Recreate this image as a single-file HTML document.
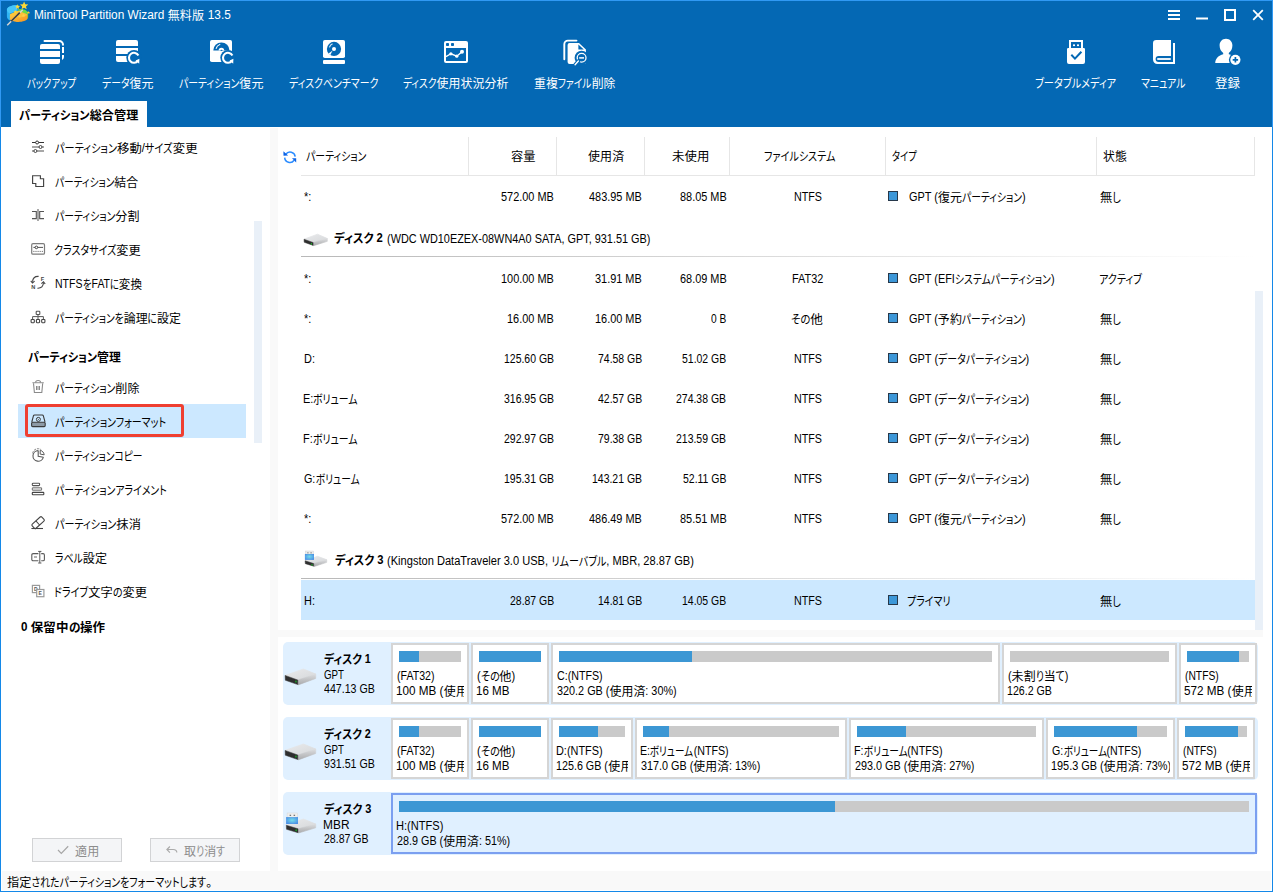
<!DOCTYPE html>
<html lang="ja"><head><meta charset="utf-8"><title>MiniTool Partition Wizard 無料版 13.5</title>
<style>
*{box-sizing:border-box}
html,body{margin:0;padding:0}
body{width:1273px;height:892px;overflow:hidden;background:#fff;position:relative;
 font-family:"Liberation Sans","Noto Sans CJK JP",sans-serif;font-size:12px;color:#000}
#app div, #app svg{position:absolute}
#app{position:absolute;left:0;top:0;width:1273px;height:892px;overflow:hidden;background:#fff}
.t{white-space:nowrap;line-height:20px;height:20px}
.k,.l{display:inline-block;position:relative;transform-origin:0 50%;white-space:pre}
.k{font-feature-settings:"palt";transform:scaleX(.82);top:1px}
.l{transform:scaleX(.91)}
.j{letter-spacing:0.1px;position:relative;top:1px}
.b{font-weight:bold}
.b .k,.b .l{transform:scaleX(.93)}
.w{color:#fff}
.g{color:#8c8c8c}
</style></head>
<body><div id="app">
<div style="left:0px;top:0px;width:1273px;height:892px;background:#1488e8;"></div>
<div style="left:0px;top:0px;width:1273px;height:127px;background:#3099f4;"></div>
<div style="left:1px;top:1px;width:1271px;height:890px;background:#fff;"></div>
<div style="left:1px;top:1px;width:1271px;height:126px;background:#0468b4;"></div>
<svg width="0" height="0" style="left:0;top:0"><defs><linearGradient id="dT" x1="0" y1="0" x2="1" y2="1"><stop offset="0" stop-color="#e9eaec"/><stop offset="1" stop-color="#d6d8da"/></linearGradient><linearGradient id="dR" x1="0" y1="0" x2="0" y2="1"><stop offset="0" stop-color="#dcdddf"/><stop offset="1" stop-color="#a9aaac"/></linearGradient><radialGradient id="uB" cx=".5" cy=".45" r=".6"><stop offset="0" stop-color="#74dcea"/><stop offset="1" stop-color="#4a8fe4"/></radialGradient></defs></svg>
<svg style="left:2px;top:0px" width="32" height="30" viewBox="2 0 32 30"><defs><linearGradient id="lgO" x1="0" y1="0" x2="1" y2="1"><stop offset="0" stop-color="#fdd24a"/><stop offset="1" stop-color="#f7931e"/></linearGradient></defs><path d="M6.9 9.5C7.5 6.6 11.5 5 17 5.2L17.6 11 10 13.8 10 20.6C8 19.6 6.9 18 6.9 16.4z" fill="#2fb4f5"/><path d="M6.9 9.5C7.5 6.6 11.5 5 17 5.2L17.6 10.2 9.8 13.4C8 12.6 6.9 11.2 6.9 9.5z" fill="#45c6fb"/><path d="M18 9.3C23 8.6 27.6 10.3 28.2 13V17.2C28 18.2 27 19 26 19.6L26 14z" fill="#4fc437"/><path d="M18 9.3C23 8.6 27.6 10.3 28.2 13C28 14 27 14.6 26 15L18.5 12z" fill="#6bd84a"/><path d="M9.9 14.2L18 10.8 27.6 14.4V18.6C26.6 21 21.5 22.3 16.8 21.9C13.6 21.6 11 20.8 9.9 19.6z" fill="url(#lgO)"/><path d="M9.9 14.2L18 10.8 27.6 14.4C26 16.4 21.5 17.4 17 17.2C13.8 17 11 16 9.9 14.2z" fill="#fdc53a" opacity=".75"/><polygon points="24.10,1.40 25.26,4.20 28.28,4.44 25.98,6.41 26.69,9.36 24.10,7.78 21.51,9.36 22.22,6.41 19.92,4.44 22.94,4.20" fill="#fdd835"/><polygon points="17.60,4.20 18.29,5.85 20.07,6.00 18.71,7.16 19.13,8.90 17.60,7.97 16.07,8.90 16.49,7.16 15.13,6.00 16.91,5.85" fill="#fdd835"/><polygon points="15.40,9.90 15.90,11.11 17.21,11.21 16.21,12.06 16.52,13.34 15.40,12.66 14.28,13.34 14.59,12.06 13.59,11.21 14.90,11.11" fill="#fdd835"/><polygon points="28.50,10.90 28.95,11.98 30.12,12.07 29.23,12.84 29.50,13.98 28.50,13.37 27.50,13.98 27.77,12.84 26.88,12.07 28.05,11.98" fill="#f9c92d"/><polygon points="23.50,13.50 24.03,14.77 25.40,14.88 24.36,15.78 24.68,17.12 23.50,16.40 22.32,17.12 22.64,15.78 21.60,14.88 22.97,14.77" fill="#fbd24a"/><polygon points="19.60,15.40 19.92,16.16 20.74,16.23 20.11,16.77 20.31,17.57 19.60,17.14 18.89,17.57 19.09,16.77 18.46,16.23 19.28,16.16" fill="#fbd24a"/><path d="M7.2 25.2L22.8 9.7" stroke="#d4d4d4" stroke-width="1.5"/><path d="M11.1 21.3L19.8 12.6" stroke="#3c3c3c" stroke-width="1.5"/></svg>
<div class="t w" style="left:33.60px;top:4.5px;transform:scaleX(1.0026);transform-origin:0 50%;"><span class="l" style="width:133.34px;transform:scaleX(0.985)">MiniTool Partition Wizard </span><span class="j">無料版</span><span class="l" style="width:26.30px;transform:scaleX(0.985)"> 13.5</span></div>
<svg style="left:1160px;top:4px" width="110" height="22" viewBox="1160 4 110 22"><path d="M1168 11h12M1168 15h12M1168 19h12" stroke="#fff" stroke-width="2"/><path d="M1196 18.5h12" stroke="#fff" stroke-width="2"/><rect x="1225" y="10" width="10" height="10" fill="none" stroke="#fff" stroke-width="2"/><path d="M1253.2 10.2l9.6 9.6M1262.8 10.2l-9.6 9.6" stroke="#fff" stroke-width="1.8"/></svg>
<svg style="left:34px;top:34px" width="36" height="36" viewBox="34 34 36 36"><path d="M40 46a2 2 0 0 1 2-2h16a2 2 0 0 1 2 2v3h-20z" fill="#fff"/><rect x="40" y="51" width="20" height="6" fill="#fff"/><path d="M40 59h20v3a2 2 0 0 1-2 2h-16a2 2 0 0 1-2-2z" fill="#fff"/><path d="M44.5 41h14.8a3.7 3.7 0 0 1 3.7 3.7" stroke="#fff" stroke-width="2" fill="none" stroke-linecap="round"/><path d="M63 47v6" stroke="#fff" stroke-width="2"/><path d="M62 55h2v2a3.4 3.4 0 0 1-2 3z" fill="#fff"/></svg>
<div class="t w" style="left:26.80px;top:73px;transform:scaleX(0.9462);transform-origin:0 50%;"><span class="k" style="width:51.84px">バックアップ</span></div>
<svg style="left:110px;top:34px" width="36" height="36" viewBox="110 34 36 36"><path d="M116 42a2 2 0 0 1 2-2h18a2 2 0 0 1 2 2v4h-22z" fill="#fff"/><rect x="116" y="48" width="22" height="6" fill="#fff"/><path d="M116 56h12v6h-10a2 2 0 0 1-2-2z" fill="#fff"/><circle cx="134" cy="57.8" r="7.7" fill="#0468b4"/><path d="M138.41 55.45A5.0 5.0 0 1 0 137.94 60.88" fill="none" stroke="#fff" stroke-width="2.1"/><path d="M135.60 60.40L139.40 58.80L139.20 63.80z" fill="#fff"/></svg>
<div class="t w" style="left:102.00px;top:73px;transform:scaleX(1.0000);transform-origin:0 50%;"><span class="k" style="width:27.51px">データ</span><span class="j">復元</span></div>
<svg style="left:204px;top:34px" width="36" height="36" viewBox="204 34 36 36"><rect x="210" y="40" width="22" height="22" rx="1.8" fill="#fff"/><path d="M213.3 50.6a8.1 8.1 0 0 1 16.2 0z" fill="#0468b4"/><path d="M218.6 50.6a2.8 2.8 0 0 1 5.6 0z" fill="#fff"/><ellipse cx="221.5" cy="50.3" rx="1.1" ry=".6" fill="#0468b4"/><path d="M216.2 48.4a5.6 5.6 0 0 1 3.6-4" stroke="#fff" stroke-width="1.1" fill="none" stroke-linecap="round"/><circle cx="228" cy="57.8" r="7.7" fill="#0468b4"/><path d="M232.41 55.45A5.0 5.0 0 1 0 231.94 60.88" fill="none" stroke="#fff" stroke-width="2.1"/><path d="M229.60 60.40L233.40 58.80L233.20 63.80z" fill="#fff"/></svg>
<div class="t w" style="left:179.00px;top:73px;transform:scaleX(1.0036);transform-origin:0 50%;"><span class="k" style="width:60.06px">パーティション</span><span class="j">復元</span></div>
<svg style="left:316px;top:34px" width="36" height="36" viewBox="316 34 36 36"><rect x="323" y="40" width="22" height="18" rx="1.8" fill="#fff"/><circle cx="334" cy="48.9" r="7.1" fill="#0468b4"/><circle cx="334" cy="48.9" r="2" fill="#fff"/><path d="M329.6 47a5 5 0 0 1 2.6-2.9" stroke="#fff" stroke-width="1.1" fill="none" stroke-linecap="round" opacity=".85"/><path d="M332.6 50.6L328.6 53.4 330.2 55.2z" fill="#fff"/><rect x="323" y="60" width="22" height="4" rx="1" fill="#fff"/></svg>
<div class="t w" style="left:288.90px;top:73px;transform:scaleX(1.0057);transform-origin:0 50%;"><span class="k" style="width:88.88px">ディスクベンチマーク</span></div>
<svg style="left:438px;top:34px" width="36" height="36" viewBox="438 34 36 36"><rect x="444" y="41" width="24" height="22" rx="2" fill="#fff"/><rect x="446" y="48" width="20" height="13" fill="#0468b4"/><rect x="446" y="43" width="3" height="3" rx=".8" fill="#0468b4"/><rect x="451" y="43" width="3" height="3" rx=".8" fill="#0468b4"/><path d="M446 56.6L450.9 53.8 456.8 56.2 462 51.8" stroke="#fff" stroke-width="1.3" fill="none"/><circle cx="450.9" cy="53.8" r="1.6" fill="#fff"/><circle cx="456.8" cy="56.2" r="1.6" fill="#fff"/><circle cx="462" cy="51.8" r="2" fill="#fff"/></svg>
<div class="t w" style="left:402.80px;top:73px;transform:scaleX(0.9906);transform-origin:0 50%;"><span class="k" style="width:33.81px">ディスク</span><span class="j">使用状況分析</span></div>
<svg style="left:557px;top:34px" width="36" height="36" viewBox="557 34 36 36"><path d="M576.5 40.6h-8.6a3.6 3.6 0 0 0-3.6 3.6v15" stroke="#fff" stroke-width="1.9" fill="none" stroke-linecap="round"/><path d="M569.6 43h9.4l6.9 6.6v12.4a2 2 0 0 1-2 2h-14.3a2 2 0 0 1-2-2v-17a2 2 0 0 1 2-2z" fill="#fff"/><path d="M578.4 44.6l5.4 5h-5.4z" fill="#0468b4"/><circle cx="581.6" cy="57.8" r="7" fill="#0468b4"/><circle cx="581.6" cy="57.8" r="4.4" fill="none" stroke="#fff" stroke-width="1.3"/><path d="M579.2 57.9h4.8" stroke="#fff" stroke-width="1.5"/><path d="M578.4 61l-3.3 3.6" stroke="#0468b4" stroke-width="3.6" stroke-linecap="round"/><path d="M578.4 61l-3.3 3.7" stroke="#fff" stroke-width="1.4" stroke-linecap="round"/></svg>
<div class="t w" style="left:534.20px;top:73px;transform:scaleX(0.9890);transform-origin:0 50%;"><span class="j">重複</span><span class="k" style="width:34.08px">ファイル</span><span class="j">削除</span></div>
<svg style="left:1058px;top:34px" width="36" height="36" viewBox="1058 34 36 36"><rect x="1069" y="40" width="14" height="9" fill="#fff"/><rect x="1071" y="42" width="10" height="6" fill="#0468b4"/><rect x="1073" y="44.4" width="2" height="1.7" fill="#fff"/><rect x="1077" y="44.4" width="2" height="1.7" fill="#fff"/><path d="M1067 49.2a1.2 1.2 0 0 1 1.2-1.2h15.6a1.2 1.2 0 0 1 1.2 1.2v12.8a2 2 0 0 1-2 2h-14a2 2 0 0 1-2-2z" fill="#fff"/><path d="M1071.3 54.8l3.65 3.8 6.45-6.84" stroke="#0468b4" stroke-width="2" fill="none"/></svg>
<div class="t w" style="left:1034.87px;top:73px;transform:scaleX(1.0325);transform-origin:0 50%;"><span class="k" style="width:78.63px">ブータブルメディア</span></div>
<svg style="left:1146px;top:34px" width="36" height="36" viewBox="1146 34 36 36"><path d="M1156.2 40h14.8v16h-12.4a3 3 0 0 0 0 6h14.4v-19h2v21h-17.6a4.4 4.4 0 0 1-4.4-4.4v-16.4a3.2 3.2 0 0 1 3.2-3.2z" fill="#fff"/><rect x="1157" y="58" width="14" height="2" rx="1" fill="#fff" opacity=".9"/></svg>
<div class="t w" style="left:1140.80px;top:73px;transform:scaleX(1.0045);transform-origin:0 50%;"><span class="k" style="width:44.29px">マニュアル</span></div>
<svg style="left:1210px;top:34px" width="36" height="36" viewBox="1210 34 36 36"><path d="M1226 38.8c3.8 0 6.4 2.8 6.4 6.8 0 3.3-1.4 6-3.6 7.3v1.4c2.6.6 4.6 1.6 6 3.2l-5.4 5.5h-14.2c.4-4.600 3.400-7.600 8-8.700v-1.400c-2.200-1.300-3.600-4-3.600-7.300 0-4 2.600-6.800 6.400-6.800z" fill="#fff"/><circle cx="1235.4" cy="59.8" r="6.5" fill="#0468b4"/><circle cx="1235.4" cy="59.8" r="5.1" fill="#fff"/><path d="M1232.700 59.8h5.400M1235.4 57.100v5.400" stroke="#0468b4" stroke-width="1.700"/></svg>
<div class="t w" style="left:1214.66px;top:73px;transform:scaleX(1.0391);transform-origin:0 50%;"><span class="j">登録</span></div>
<div style="left:11px;top:101px;width:136px;height:26px;background:#fff;"></div>
<div class="t b" style="left:18.90px;top:105px;transform:scaleX(1.0085);transform-origin:0 50%;"><span class="k" style="width:70.06px">パーティション</span><span class="j">総合管理</span></div>
<div style="left:270px;top:128px;width:8px;height:743px;background:#f9f9f9;"></div>
<div style="left:254px;top:221px;width:8px;height:222px;background:#e9f0f8;"></div>
<div style="left:18px;top:404px;width:228px;height:34px;background:#cce8ff;"></div>
<svg style="left:28px;top:135px" width="22" height="24" viewBox="28 135 22 24"><g transform="translate(0 0)" fill="none" stroke="#5a5a5a" stroke-width="1"><path d="M32 142.5h12" stroke="#333"/><path d="M32 147h12M32 151h12" stroke="#8a8a8a" stroke-width="1.400"/><circle cx="37.1" cy="142.5" r="1.500" fill="#fff" stroke="#333"/><circle cx="40.5" cy="147" r="1.500" fill="#fff" stroke="#444"/><circle cx="35.4" cy="151" r="1.500" fill="#fff" stroke="#444"/></g></svg>
<div class="t" style="left:54.80px;top:138px;transform:scaleX(1.0319);transform-origin:0 50%;"><span class="k" style="width:60.06px">パーティション</span><span class="j">移動</span><span class="l" style="width:3.04px">/</span><span class="k" style="width:26.77px">サイズ</span><span class="j">変更</span></div>
<svg style="left:28px;top:169px" width="22" height="24" viewBox="28 169 22 24"><g transform="translate(0 0)" fill="none" stroke="#5a5a5a" stroke-width="1"><path d="M32.6 175.700h7.800v3h3.200v7.800h-7.800v-3h-3.200z" stroke="#444" stroke-width="1.150"/></g></svg>
<div class="t" style="left:54.80px;top:172px;transform:scaleX(0.9881);transform-origin:0 50%;"><span class="k" style="width:60.06px">パーティション</span><span class="j">結合</span></div>
<svg style="left:28px;top:203px" width="22" height="24" viewBox="28 203 22 24"><g transform="translate(0 0)" fill="none" stroke="#5a5a5a" stroke-width="1"><path d="M38 209v12" stroke="#9a9a9a" stroke-width="1.700"/><path d="M32 211.500h4.300v7.100h-4.300M44 211.500h-4.300v7.100h4.300" stroke="#555" stroke-width="1.100"/></g></svg>
<div class="t" style="left:54.80px;top:206px;transform:scaleX(1.0036);transform-origin:0 50%;"><span class="k" style="width:60.06px">パーティション</span><span class="j">分割</span></div>
<svg style="left:28px;top:237px" width="22" height="24" viewBox="28 237 22 24"><g transform="translate(0 0)" fill="none" stroke="#5a5a5a" stroke-width="1"><rect x="31.700" y="243.700" width="12.800" height="10.500" rx="1.300" stroke="#7c7c7c" stroke-width="1.200"/><path d="M33.400 247.400h9.600" stroke="#555"/><circle cx="36.4" cy="247.400" r="1.300" fill="#fff" stroke="#444"/><path d="M33.400 251.400h9.600" stroke="#555" stroke-width="1" stroke-dasharray="1 1.100"/></g></svg>
<div class="t" style="left:53.78px;top:240px;transform:scaleX(1.0155);transform-origin:0 50%;"><span class="k" style="width:61.36px">クラスタサイズ</span><span class="j">変更</span></div>
<svg style="left:28px;top:271px" width="22" height="24" viewBox="28 271 22 24"><g transform="translate(0 0)" fill="none" stroke="#5a5a5a" stroke-width="1"><path d="M38.6 276.400c-3.400-.200-5.800 2-6.100 5.400" stroke="#444" stroke-width="1.100"/><path d="M30.800 280.800l1.700 2.200 2.100-1.900" stroke="#444" stroke-width="1.100"/><path d="M37.400 288.200c3.400.200 5.800-2 6.100-5.400" stroke="#444" stroke-width="1.100"/><path d="M45.200 284l-1.700-2.200-2.100 1.900" stroke="#444" stroke-width="1.100"/><text x="40.800" y="280.900" font-family="Liberation Sans,sans-serif" font-size="5.600" font-weight="bold" fill="#444" stroke="none">F</text><text x="31.300" y="288.900" font-family="Liberation Sans,sans-serif" font-size="5.600" font-weight="bold" fill="#444" stroke="none">N</text></g></svg>
<div class="t" style="left:54.64px;top:274px;transform:scaleX(0.9618);transform-origin:0 50%;"><span class="l" style="width:28.52px">NTFS</span><span class="k" style="width:9.08px">を</span><span class="l" style="width:19.22px">FAT</span><span class="k" style="width:9.48px">に</span><span class="j">変換</span></div>
<svg style="left:28px;top:305px" width="22" height="24" viewBox="28 305 22 24"><g transform="translate(0 0)" fill="none" stroke="#5a5a5a" stroke-width="1"><rect x="36.200" y="311.300" width="3.600" height="3.200" rx=".6" stroke="#555" stroke-width="1.100"/><path d="M38 314.500v2M32.600 319.400v-2.800h10.800v2.800M38 316.600v2.800" stroke="#555" stroke-width="1"/><rect x="31.1" y="319.500" width="3.200" height="3.200" rx=".6" stroke="#444" stroke-width="1.100"/><rect x="36.4" y="319.500" width="3.200" height="3.200" rx=".6" stroke="#444" stroke-width="1.100"/><rect x="41.7" y="319.500" width="3.200" height="3.200" rx=".6" stroke="#444" stroke-width="1.100"/></g></svg>
<div class="t" style="left:54.80px;top:308px;transform:scaleX(0.9929);transform-origin:0 50%;"><span class="k" style="width:69.15px">パーティションを</span><span class="j">論理</span><span class="k" style="width:9.48px">に</span><span class="j">設定</span></div>
<svg style="left:28px;top:375px" width="22" height="24" viewBox="28 375 22 24"><g transform="translate(0 0)" fill="none" stroke="#5a5a5a" stroke-width="1"><path d="M32.400 382.700h11.400" stroke="#9a9a9a" stroke-width="1.100"/><path d="M35.600 382.400c0-2.600 5-2.600 5 0" stroke="#8a8a8a" stroke-width="1.100"/><path d="M33.500 383.200l.9 9.300h7.400l.9-9.300" stroke="#8a8a8a" stroke-width="1.100"/><path d="M36.800 386v3.900M39.200 386v3.900" stroke="#777" stroke-width="1.300"/></g></svg>
<div class="t" style="left:54.80px;top:378px;transform:scaleX(1.0036);transform-origin:0 50%;"><span class="k" style="width:60.06px">パーティション</span><span class="j">削除</span></div>
<svg style="left:28px;top:409px" width="22" height="24" viewBox="28 409 22 24"><g transform="translate(0 0)" fill="none" stroke="#5a5a5a" stroke-width="1"><path d="M31.800 422l1.700-6.300c.2-.5.500-.7 1-.7h7.800c.5 0 .8.200 1 .7l1.700 6.300" stroke="#3a3a3a" stroke-width="1.100"/><rect x="31.600" y="422.300" width="13.600" height="4.300" rx="1" stroke="#3a3a3a" stroke-width="1.100" fill="#8d9aa6"/><circle cx="38.4" cy="419.400" r="2" stroke="#3a3a3a" stroke-width="1"/><circle cx="38.4" cy="419.400" r=".5" fill="#3a3a3a" stroke="none"/></g></svg>
<div class="t" style="left:54.80px;top:412px;transform:scaleX(1.0156);transform-origin:0 50%;"><span class="k" style="width:109.48px">パーティションフォーマット</span></div>
<svg style="left:28px;top:443px" width="22" height="24" viewBox="28 443 22 24"><g transform="translate(0 0)" fill="none" stroke="#5a5a5a" stroke-width="1"><path d="M38.2 450.6a5.3 5.3 0 1 0 5.2 6.6" stroke="#5a5a5a" stroke-width="1.1"/><path d="M32.6 453.4a5.4 5.4 0 0 1 8.6-3.6" stroke="#8a8a8a" stroke-width="1" stroke-dasharray="2.4 .9"/><path d="M38.2 450.6v5.6l5.200 1" stroke="#5a5a5a" stroke-width="1.1"/><path d="M40.200 450.300c2.200.5 3.700 2.200 4 4.500l-4-0.700z" stroke="#5a5a5a" stroke-width="1"/></g></svg>
<div class="t" style="left:54.80px;top:446px;transform:scaleX(0.9909);transform-origin:0 50%;"><span class="k" style="width:88.27px">パーティションコピー</span></div>
<svg style="left:28px;top:477px" width="22" height="24" viewBox="28 477 22 24"><g transform="translate(0 0)" fill="none" stroke="#5a5a5a" stroke-width="1"><rect x="32.300" y="483.300" width="7.300" height="2.300" rx=".8" stroke="#555" stroke-width="1.100"/><rect x="32.300" y="487.700" width="9.300" height="2.600" rx=".9" stroke="#777" stroke-width="1.100" fill="#e4e4e4"/><rect x="32.300" y="492.400" width="11.500" height="2.400" rx=".6" stroke="#444" stroke-width="1.100"/></g></svg>
<div class="t" style="left:54.80px;top:480px;transform:scaleX(1.0045);transform-origin:0 50%;"><span class="k" style="width:111.31px">パーティションアライメント</span></div>
<svg style="left:28px;top:511px" width="22" height="24" viewBox="28 511 22 24"><g transform="translate(0 0)" fill="none" stroke="#5a5a5a" stroke-width="1"><path d="M31.400 528.500h11.600" stroke="#444" stroke-width="1.100"/><g transform="rotate(-42 38.100 522.600)"><rect x="31.600" y="519.800" width="13" height="5.600" rx="1.200" stroke="#444" stroke-width="1.100"/><path d="M37.600 519.800v5.600" stroke="#444" stroke-width="1"/></g></g></svg>
<div class="t" style="left:54.80px;top:514px;transform:scaleX(1.0217);transform-origin:0 50%;"><span class="k" style="width:60.06px">パーティション</span><span class="j">抹消</span></div>
<svg style="left:28px;top:545px" width="22" height="24" viewBox="28 545 22 24"><g transform="translate(0 0)" fill="none" stroke="#5a5a5a" stroke-width="1"><path d="M38.400 553.600h-5.300a1.300 1.300 0 0 0-1.300 1.300v4.600a1.300 1.300 0 0 0 1.300 1.300h5.300M41.200 553.600h1.900a1.300 1.300 0 0 1 1.300 1.300v4.600a1.300 1.300 0 0 1-1.300 1.300h-1.900" stroke="#5a5a5a" stroke-width="1.100"/><path d="M39.800 551.600v11.200M38.200 551.400h3.200M38.200 563h3.200" stroke="#555" stroke-width="1"/><path d="M34 557h3" stroke="#999" stroke-width="1.500"/></g></svg>
<div class="t" style="left:54.80px;top:548px;transform:scaleX(1.0020);transform-origin:0 50%;"><span class="k" style="width:27.75px">ラベル</span><span class="j">設定</span></div>
<svg style="left:28px;top:579px" width="22" height="24" viewBox="28 579 22 24"><g transform="translate(0 0)" fill="none" stroke="#5a5a5a" stroke-width="1"><rect x="32.400" y="585.400" width="7.200" height="7.200" stroke="#9a9a9a" stroke-width="1.200" fill="#fff"/><text x="34.100" y="590.900" font-family="Liberation Sans,sans-serif" font-size="5" font-weight="bold" fill="#555" stroke="none">D</text><rect x="36.700" y="589.500" width="7.200" height="7.200" stroke="#9a9a9a" stroke-width="1.200" fill="#fff"/><text x="38.600" y="595.100" font-family="Liberation Sans,sans-serif" font-size="5" font-weight="bold" fill="#555" stroke="none">E</text></g></svg>
<div class="t" style="left:54.38px;top:582px;transform:scaleX(1.0167);transform-origin:0 50%;"><span class="k" style="width:33.59px">ドライブ</span><span class="j">文字</span><span class="k" style="width:9.49px">の</span><span class="j">変更</span></div>
<div class="t b" style="left:28.10px;top:347px;transform:scaleX(0.9862);transform-origin:0 50%;"><span class="k" style="width:70.06px">パーティション</span><span class="j">管理</span></div>
<div class="t b" style="left:20.50px;top:617px;transform:scaleX(1.0420);transform-origin:0 50%;"><span class="l" style="width:9.31px">0 </span><span class="j">保留中</span><span class="k" style="width:11.01px">の</span><span class="j">操作</span></div>
<div style="left:25px;top:404px;width:159px;height:33px;border:3px solid #ef3f31;border-radius:3px"></div>
<div style="left:32px;top:838px;width:90px;height:24px;border:1px solid #d2d3d5;background:#f4f5f7"></div>
<div style="left:150px;top:838px;width:90px;height:24px;border:1px solid #d2d3d5;background:#f4f5f7"></div>
<svg style="left:54px;top:842px" width="18" height="16" viewBox="54 842 18 16"><path d="M58 850l3.300 3.300 6.900-7.050" fill="none" stroke="#a6a6a6" stroke-width="1.200"/></svg>
<svg style="left:163px;top:842px" width="18" height="16" viewBox="163 842 18 16"><path d="M169.900 846.500l-3 3 3 3.100M167 849.500h6.200c2.200 0 3.600 1.400 3.600 3.100" fill="none" stroke="#ababab" stroke-width="1.200"/></svg>
<div class="t g" style="left:75.00px;top:841px;transform:scaleX(1.0043);transform-origin:0 50%;"><span class="j">適用</span></div>
<div class="t g" style="left:183.90px;top:841px;transform:scaleX(1.0000);transform-origin:0 50%;"><span class="j">取</span><span class="k" style="width:8.19px">り</span><span class="j">消</span><span class="k" style="width:8.92px">す</span></div>
<svg style="left:280px;top:146px" width="20" height="22" viewBox="280 146 20 22"><path d="M285.800 154.200a5.200 5.200 0 0 1 9.400 2.400" fill="none" stroke="#2b8cff" stroke-width="1.500"/><path d="M283.400 151.200l4.700 4.400-4.600.1z" fill="#0a62e6"/><path d="M284.700 157.600a5.200 5.200 0 0 0 9.400 2.700" fill="none" stroke="#2b8cff" stroke-width="1.500"/><path d="M292 158.300h4.200v4.200z" fill="#0a62e6"/></svg>
<div style="left:301px;top:175px;width:954px;height:1px;background:#e6e6e6;"></div>
<div style="left:468px;top:137px;width:1px;height:38px;background:#e6e6e6;"></div>
<div style="left:556px;top:137px;width:1px;height:38px;background:#e6e6e6;"></div>
<div style="left:644px;top:137px;width:1px;height:38px;background:#e6e6e6;"></div>
<div style="left:729px;top:137px;width:1px;height:38px;background:#e6e6e6;"></div>
<div style="left:885px;top:137px;width:1px;height:38px;background:#e6e6e6;"></div>
<div style="left:1096px;top:137px;width:1px;height:38px;background:#e6e6e6;"></div>
<div style="left:1254px;top:137px;width:1px;height:38px;background:#e6e6e6;"></div>
<div class="t" style="left:306.40px;top:146px;transform:scaleX(1.0067);transform-origin:0 50%;"><span class="k" style="width:60.06px">パーティション</span></div>
<div class="t" style="left:510.78px;top:146px;transform:scaleX(1.0174);transform-origin:0 50%;"><span class="j">容量</span></div>
<div class="t" style="left:587.60px;top:146px;transform:scaleX(0.9972);transform-origin:0 50%;"><span class="j">使用済</span></div>
<div class="t" style="left:672.20px;top:146px;transform:scaleX(1.0343);transform-origin:0 50%;"><span class="j">未使用</span></div>
<div class="t" style="left:763.50px;top:146px;transform:scaleX(1.0214);transform-origin:0 50%;"><span class="k" style="width:69.91px">ファイルシステム</span></div>
<div class="t" style="left:891.50px;top:146px;transform:scaleX(0.9407);transform-origin:0 50%;"><span class="k" style="width:26.33px">タイプ</span></div>
<div class="t" style="left:1102.70px;top:146px;transform:scaleX(0.9875);transform-origin:0 50%;"><span class="j">状態</span></div>
<div style="left:1255px;top:291px;width:8px;height:339px;background:#e9f0f8;"></div>
<div style="left:301px;top:580px;width:954px;height:40px;background:#cce8ff;"></div>
<div class="t" style="left:304px;top:187px;"><span class="l" style="width:7.29px">*:</span></div>
<div class="t" style="right:719.3px;top:187px;"><span class="l" style="width:52.82px">572.00 MB</span></div>
<div class="t" style="right:631.2px;top:187px;"><span class="l" style="width:52.82px">483.95 MB</span></div>
<div class="t" style="right:546.6px;top:187px;"><span class="l" style="width:46.75px">88.05 MB</span></div>
<div class="t" style="left:793.52px;top:187px;transform:scaleX(0.9815);transform-origin:0 50%;"><span class="l" style="width:28.52px">NTFS</span></div>
<div style="left:888px;top:191px;width:10px;height:10px;background:#3c97d8;border:1px solid #27384a"></div>
<div class="t" style="left:908.60px;top:187px;transform:scaleX(0.9991);transform-origin:0 50%;"><span class="l" style="width:28.92px">GPT (</span><span class="j">復元</span><span class="k" style="width:60.06px">パーティション</span><span class="l" style="width:3.64px">)</span></div>
<div class="t" style="left:1099.50px;top:187px;transform:scaleX(1.0250);transform-origin:0 50%;"><span class="j">無</span><span class="k" style="width:8.32px">し</span></div>
<div class="t" style="left:304px;top:269px;"><span class="l" style="width:7.29px">*:</span></div>
<div class="t" style="right:719.3px;top:269px;"><span class="l" style="width:52.82px">100.00 MB</span></div>
<div class="t" style="right:631.2px;top:269px;"><span class="l" style="width:46.75px">31.91 MB</span></div>
<div class="t" style="right:546.6px;top:269px;"><span class="l" style="width:46.75px">68.09 MB</span></div>
<div class="t" style="left:792.40px;top:269px;transform:scaleX(0.9967);transform-origin:0 50%;"><span class="l" style="width:31.37px">FAT32</span></div>
<div style="left:888px;top:273px;width:10px;height:10px;background:#3c97d8;border:1px solid #27384a"></div>
<div class="t" style="left:908.70px;top:269px;transform:scaleX(0.9993);transform-origin:0 50%;"><span class="l" style="width:45.91px">GPT (EFI</span><span class="k" style="width:95.88px">システムパーティション</span><span class="l" style="width:3.64px">)</span></div>
<div class="t" style="left:1098.58px;top:269px;transform:scaleX(1.0195);transform-origin:0 50%;"><span class="k" style="width:42.08px">アクティブ</span></div>
<div class="t" style="left:304px;top:309px;"><span class="l" style="width:7.29px">*:</span></div>
<div class="t" style="right:719.3px;top:309px;"><span class="l" style="width:46.75px">16.00 MB</span></div>
<div class="t" style="right:631.2px;top:309px;"><span class="l" style="width:46.75px">16.00 MB</span></div>
<div class="t" style="right:546.6px;top:309px;"><span class="l" style="width:15.31px;transform:scaleX(0.85)">0 B</span></div>
<div class="t" style="left:790.75px;top:309px;transform:scaleX(1.0517);transform-origin:0 50%;"><span class="k" style="width:18.37px">その</span><span class="j">他</span></div>
<div style="left:888px;top:313px;width:10px;height:10px;background:#3c97d8;border:1px solid #27384a"></div>
<div class="t" style="left:908.60px;top:309px;transform:scaleX(0.9983);transform-origin:0 50%;"><span class="l" style="width:28.92px">GPT (</span><span class="j">予約</span><span class="k" style="width:60.06px">パーティション</span><span class="l" style="width:3.64px">)</span></div>
<div class="t" style="left:1099.50px;top:309px;transform:scaleX(1.0250);transform-origin:0 50%;"><span class="j">無</span><span class="k" style="width:8.32px">し</span></div>
<div class="t" style="left:304px;top:349px;"><span class="l" style="width:10.92px">D:</span></div>
<div class="t" style="right:719.3px;top:349px;"><span class="l" style="width:50.03px;transform:scaleX(0.872)">125.60 GB</span></div>
<div class="t" style="right:631.2px;top:349px;"><span class="l" style="width:44.21px;transform:scaleX(0.872)">74.58 GB</span></div>
<div class="t" style="right:546.6px;top:349px;"><span class="l" style="width:44.21px;transform:scaleX(0.872)">51.02 GB</span></div>
<div class="t" style="left:793.52px;top:349px;transform:scaleX(0.9815);transform-origin:0 50%;"><span class="l" style="width:28.52px">NTFS</span></div>
<div style="left:888px;top:353px;width:10px;height:10px;background:#3c97d8;border:1px solid #27384a"></div>
<div class="t" style="left:908.60px;top:349px;transform:scaleX(1.0042);transform-origin:0 50%;"><span class="l" style="width:28.92px">GPT (</span><span class="k" style="width:87.56px">データパーティション</span><span class="l" style="width:3.64px">)</span></div>
<div class="t" style="left:1099.50px;top:349px;transform:scaleX(1.0250);transform-origin:0 50%;"><span class="j">無</span><span class="k" style="width:8.32px">し</span></div>
<div class="t" style="left:303.10px;top:389px;transform:scaleX(1.0019);transform-origin:0 50%;"><span class="l" style="width:10.32px">E:</span><span class="k" style="width:44.50px">ボリューム</span></div>
<div class="t" style="right:719.3px;top:389px;"><span class="l" style="width:50.03px;transform:scaleX(0.872)">316.95 GB</span></div>
<div class="t" style="right:631.2px;top:389px;"><span class="l" style="width:44.21px;transform:scaleX(0.872)">42.57 GB</span></div>
<div class="t" style="right:546.6px;top:389px;"><span class="l" style="width:50.03px;transform:scaleX(0.872)">274.38 GB</span></div>
<div class="t" style="left:793.52px;top:389px;transform:scaleX(0.9815);transform-origin:0 50%;"><span class="l" style="width:28.52px">NTFS</span></div>
<div style="left:888px;top:393px;width:10px;height:10px;background:#3c97d8;border:1px solid #27384a"></div>
<div class="t" style="left:908.60px;top:389px;transform:scaleX(1.0042);transform-origin:0 50%;"><span class="l" style="width:28.92px">GPT (</span><span class="k" style="width:87.56px">データパーティション</span><span class="l" style="width:3.64px">)</span></div>
<div class="t" style="left:1099.50px;top:389px;transform:scaleX(1.0250);transform-origin:0 50%;"><span class="j">無</span><span class="k" style="width:8.32px">し</span></div>
<div class="t" style="left:303.10px;top:429px;transform:scaleX(1.0019);transform-origin:0 50%;"><span class="l" style="width:9.71px">F:</span><span class="k" style="width:44.50px">ボリューム</span></div>
<div class="t" style="right:719.3px;top:429px;"><span class="l" style="width:50.03px;transform:scaleX(0.872)">292.97 GB</span></div>
<div class="t" style="right:631.2px;top:429px;"><span class="l" style="width:44.21px;transform:scaleX(0.872)">79.38 GB</span></div>
<div class="t" style="right:546.6px;top:429px;"><span class="l" style="width:50.03px;transform:scaleX(0.872)">213.59 GB</span></div>
<div class="t" style="left:793.52px;top:429px;transform:scaleX(0.9815);transform-origin:0 50%;"><span class="l" style="width:28.52px">NTFS</span></div>
<div style="left:888px;top:433px;width:10px;height:10px;background:#3c97d8;border:1px solid #27384a"></div>
<div class="t" style="left:908.60px;top:429px;transform:scaleX(1.0042);transform-origin:0 50%;"><span class="l" style="width:28.92px">GPT (</span><span class="k" style="width:87.56px">データパーティション</span><span class="l" style="width:3.64px">)</span></div>
<div class="t" style="left:1099.50px;top:429px;transform:scaleX(1.0250);transform-origin:0 50%;"><span class="j">無</span><span class="k" style="width:8.32px">し</span></div>
<div class="t" style="left:304.10px;top:469px;transform:scaleX(0.9857);transform-origin:0 50%;"><span class="l" style="width:11.53px">G:</span><span class="k" style="width:44.50px">ボリューム</span></div>
<div class="t" style="right:719.3px;top:469px;"><span class="l" style="width:50.03px;transform:scaleX(0.872)">195.31 GB</span></div>
<div class="t" style="right:631.2px;top:469px;"><span class="l" style="width:50.03px;transform:scaleX(0.872)">143.21 GB</span></div>
<div class="t" style="right:546.6px;top:469px;"><span class="l" style="width:43.44px;transform:scaleX(0.872)">52.11 GB</span></div>
<div class="t" style="left:793.52px;top:469px;transform:scaleX(0.9815);transform-origin:0 50%;"><span class="l" style="width:28.52px">NTFS</span></div>
<div style="left:888px;top:473px;width:10px;height:10px;background:#3c97d8;border:1px solid #27384a"></div>
<div class="t" style="left:908.60px;top:469px;transform:scaleX(1.0042);transform-origin:0 50%;"><span class="l" style="width:28.92px">GPT (</span><span class="k" style="width:87.56px">データパーティション</span><span class="l" style="width:3.64px">)</span></div>
<div class="t" style="left:1099.50px;top:469px;transform:scaleX(1.0250);transform-origin:0 50%;"><span class="j">無</span><span class="k" style="width:8.32px">し</span></div>
<div class="t" style="left:304px;top:509px;"><span class="l" style="width:7.29px">*:</span></div>
<div class="t" style="right:719.3px;top:509px;"><span class="l" style="width:52.82px">572.00 MB</span></div>
<div class="t" style="right:631.2px;top:509px;"><span class="l" style="width:52.82px">486.49 MB</span></div>
<div class="t" style="right:546.6px;top:509px;"><span class="l" style="width:46.75px">85.51 MB</span></div>
<div class="t" style="left:793.52px;top:509px;transform:scaleX(0.9815);transform-origin:0 50%;"><span class="l" style="width:28.52px">NTFS</span></div>
<div style="left:888px;top:513px;width:10px;height:10px;background:#3c97d8;border:1px solid #27384a"></div>
<div class="t" style="left:908.60px;top:509px;transform:scaleX(0.9991);transform-origin:0 50%;"><span class="l" style="width:28.92px">GPT (</span><span class="j">復元</span><span class="k" style="width:60.06px">パーティション</span><span class="l" style="width:3.64px">)</span></div>
<div class="t" style="left:1099.50px;top:509px;transform:scaleX(1.0250);transform-origin:0 50%;"><span class="j">無</span><span class="k" style="width:8.32px">し</span></div>
<div class="t" style="left:304px;top:591px;"><span class="l" style="width:10.92px">H:</span></div>
<div class="t" style="right:719.3px;top:591px;"><span class="l" style="width:44.21px;transform:scaleX(0.872)">28.87 GB</span></div>
<div class="t" style="right:631.2px;top:591px;"><span class="l" style="width:44.21px;transform:scaleX(0.872)">14.81 GB</span></div>
<div class="t" style="right:546.6px;top:591px;"><span class="l" style="width:44.21px;transform:scaleX(0.872)">14.05 GB</span></div>
<div class="t" style="left:793.52px;top:591px;transform:scaleX(0.9815);transform-origin:0 50%;"><span class="l" style="width:28.52px">NTFS</span></div>
<div style="left:888px;top:595px;width:10px;height:10px;background:#3c97d8;border:1px solid #27384a"></div>
<div class="t" style="left:906.59px;top:591px;transform:scaleX(1.0098);transform-origin:0 50%;"><span class="k" style="width:43.10px">プライマリ</span></div>
<div class="t" style="left:1099.50px;top:591px;transform:scaleX(1.0250);transform-origin:0 50%;"><span class="j">無</span><span class="k" style="width:8.32px">し</span></div>
<svg style="left:300px;top:228px" width="32" height="20" viewBox="300 228 32 20"><g transform="translate(0 0.0)"><path d="M304 239.2L317.5 234.2L327.4 238.6L313.1 242.5z" fill="url(#dT)" stroke="url(#dT)" stroke-width=".8" stroke-linejoin="round"/><path d="M313.1 242.5L327.4 238.6L327.29999999999995 241.35L313.40000000000003 245.70z" fill="url(#dR)" stroke="url(#dR)" stroke-width=".6" stroke-linejoin="round"/><path d="M304 239.2L313.1 242.5L313.1 245.40L304.2 242.24z" fill="#2e2e2e" stroke="#3a3a3a" stroke-width=".5" stroke-linejoin="round"/><rect x="310.85" y="242.95" width="1.17" height="1.80" rx=".4" fill="#19b325"/></g></svg>
<div class="t b" style="left:334.40px;top:227.5px;transform:scaleX(1.0104);transform-origin:0 50%;"><span class="k" style="width:39.23px">ディスク</span><span class="l" style="width:9.31px"> 2</span></div>
<div class="t" style="left:387.20px;top:228.5px;transform:scaleX(0.9973);transform-origin:0 50%;"><span class="l" style="width:264.17px">(WDC WD10EZEX-08WN4A0 SATA, GPT, 931.51 GB)</span></div>
<svg style="left:300px;top:548px" width="32" height="22" viewBox="300 548 32 22"><g transform="translate(0 0.0)"><path d="M305.1 560.8L317.5 556.3L326.8 559.8L313.7 563.5z" fill="url(#dT)" stroke="url(#dT)" stroke-width=".8" stroke-linejoin="round"/><path d="M313.7 563.5L326.8 559.8L326.7 562.37L314.0 566.50z" fill="url(#dR)" stroke="url(#dR)" stroke-width=".6" stroke-linejoin="round"/><path d="M305.1 560.8L313.7 563.5L313.7 566.20L305.3 563.63z" fill="#2e2e2e" stroke="#3a3a3a" stroke-width=".5" stroke-linejoin="round"/><rect x="311.45" y="563.95" width="1.17" height="1.80" rx=".4" fill="#19b325"/><rect x="305.300" y="551" width="8.400" height="3.200" fill="#ececec" stroke="#cfcfcf" stroke-width=".4"/><rect x="307.200" y="552.300" width="1.400" height="1.100" fill="#8a8a8a"/><rect x="310.400" y="552.300" width="1.400" height="1.100" fill="#8a8a8a"/><rect x="304.900" y="554" width="9.100" height="5.900" fill="url(#uB)"/></g></svg>
<div class="t b" style="left:334.60px;top:549.5px;transform:scaleX(1.0042);transform-origin:0 50%;"><span class="k" style="width:39.23px">ディスク</span><span class="l" style="width:9.31px"> 3</span></div>
<div class="t" style="left:386.70px;top:550.5px;transform:scaleX(1.0156);transform-origin:0 50%;"><span class="l" style="width:161.65px">(Kingston DataTraveler 3.0 USB, </span><span class="k" style="width:54.00px">リムーバブル</span><span class="l" style="width:86.18px">, MBR, 28.87 GB)</span></div>
<div style="left:301px;top:256px;width:954px;height:1px;background:linear-gradient(to right,#b8b8b8,#fff);"></div>
<div style="left:301px;top:578px;width:954px;height:1px;background:linear-gradient(to right,#b8b8b8,#fff);"></div>
<div style="left:278px;top:630px;width:985px;height:7px;background:#f9f9f9;"></div>
<div style="left:283px;top:642px;width:975px;height:63px;background:#e0f0ff;border-radius:5px"></div>
<svg style="left:283px;top:662px" width="37" height="30" viewBox="283 662 37 30"><g transform="translate(0 0)"><path d="M285.1 675.4L303.4 669L315.8 674.1L297.8 680z" fill="url(#dT)" stroke="url(#dT)" stroke-width=".8" stroke-linejoin="round"/><path d="M297.8 680L315.8 674.1L315.7 678.47L298.1 684.90z" fill="url(#dR)" stroke="url(#dR)" stroke-width=".6" stroke-linejoin="round"/><path d="M285.1 675.4L297.8 680L297.8 684.60L285.3 680.23z" fill="#2e2e2e" stroke="#3a3a3a" stroke-width=".5" stroke-linejoin="round"/><rect x="295.30" y="680.50" width="1.30" height="2.00" rx=".4" fill="#19b325"/></g></svg>
<div class="t b" style="left:324.10px;top:648.7px;transform:scaleX(0.9667);transform-origin:0 50%;"><span class="k" style="width:39.23px">ディスク</span><span class="l" style="width:9.31px"> 1</span></div>
<div class="t" style="left:324.10px;top:664.5px;transform:scaleX(0.8870);transform-origin:0 50%;"><span class="l" style="width:22.45px">GPT</span></div>
<div class="t" style="left:324.10px;top:678.8px;transform:scaleX(0.9731);transform-origin:0 50%;"><span class="l" style="width:52.21px">447.13 GB</span></div>
<div style="left:391px;top:643px;width:78px;height:61px;border:2px solid #d5d5d5;background:#fff"></div>
<div style="left:399px;top:651px;width:62px;height:11px;background:#cacaca"></div>
<div style="left:399px;top:651px;width:20px;height:11px;background:#3c97d4"></div>
<div style="left:393px;top:664px;width:71.4px;height:38px;overflow:hidden">
<div class="t" style="left:3.70px;top:2px;transform:scaleX(0.9684);transform-origin:0 50%;"><span class="l" style="width:38.63px">(FAT32)</span></div>
<div class="t" style="left:3.399999999999989px;top:17px;"><span class="l" style="width:47.47px;transform:scaleX(0.975)">100 MB (</span><span class="j">使用</span></div>
</div>
<div style="left:471px;top:643px;width:78px;height:61px;border:2px solid #d5d5d5;background:#fff"></div>
<div style="left:479px;top:651px;width:62px;height:11px;background:#cacaca"></div>
<div style="left:479px;top:651px;width:62px;height:11px;background:#3c97d4"></div>
<div style="left:473px;top:664px;width:71.4px;height:38px;overflow:hidden">
<div class="t" style="left:3.70px;top:2px;transform:scaleX(1.0135);transform-origin:0 50%;"><span class="l" style="width:3.64px">(</span><span class="k" style="width:18.37px">その</span><span class="j">他</span><span class="l" style="width:3.64px">)</span></div>
<div class="t" style="left:2.64px;top:17px;transform:scaleX(1.0600);transform-origin:0 50%;"><span class="l" style="width:31.57px">16 MB</span></div>
</div>
<div style="left:551px;top:643px;width:449px;height:61px;border:2px solid #d5d5d5;background:#fff"></div>
<div style="left:559px;top:651px;width:433px;height:11px;background:#cacaca"></div>
<div style="left:559px;top:651px;width:133px;height:11px;background:#3c97d4"></div>
<div style="left:553px;top:664px;width:442.4px;height:38px;overflow:hidden">
<div class="t" style="left:3.70px;top:2px;transform:scaleX(0.9761);transform-origin:0 50%;"><span class="l" style="width:46.71px">C:(NTFS)</span></div>
<div class="t" style="left:3.70px;top:17px;transform:scaleX(0.9925);transform-origin:0 50%;"><span class="l" style="width:52.81px">320.2 GB (</span><span class="j">使用済</span><span class="l" style="width:31.57px">: 30%)</span></div>
</div>
<div style="left:1002px;top:643px;width:175px;height:61px;border:2px solid #d5d5d5;background:#fff"></div>
<div style="left:1010px;top:651px;width:159px;height:11px;background:#cacaca"></div>
<div style="left:1004px;top:664px;width:168.4px;height:38px;overflow:hidden">
<div class="t" style="left:3.70px;top:2px;transform:scaleX(0.9950);transform-origin:0 50%;"><span class="l" style="width:3.64px">(</span><span class="j">未割</span><span class="k" style="width:8.19px">り</span><span class="j">当</span><span class="k" style="width:9.06px">て</span><span class="l" style="width:3.64px">)</span></div>
<div class="t" style="left:2.73px;top:17px;transform:scaleX(0.9733);transform-origin:0 50%;"><span class="l" style="width:46.14px">126.2 GB</span></div>
</div>
<div style="left:1179px;top:643px;width:78px;height:61px;border:2px solid #d5d5d5;background:#fff"></div>
<div style="left:1187px;top:651px;width:62px;height:11px;background:#cacaca"></div>
<div style="left:1187px;top:651px;width:52px;height:11px;background:#3c97d4"></div>
<div style="left:1181px;top:664px;width:71.4px;height:38px;overflow:hidden">
<div class="t" style="left:3.70px;top:2px;transform:scaleX(0.9417);transform-origin:0 50%;"><span class="l" style="width:35.79px">(NTFS)</span></div>
<div class="t" style="left:3.4000000000000457px;top:17px;"><span class="l" style="width:47.47px;transform:scaleX(0.975)">572 MB (</span><span class="j">使用</span></div>
</div>
<div style="left:283px;top:717px;width:975px;height:63px;background:#e0f0ff;border-radius:5px"></div>
<svg style="left:283px;top:737px" width="37" height="30" viewBox="283 737 37 30"><g transform="translate(0 75)"><path d="M285.1 675.4L303.4 669L315.8 674.1L297.8 680z" fill="url(#dT)" stroke="url(#dT)" stroke-width=".8" stroke-linejoin="round"/><path d="M297.8 680L315.8 674.1L315.7 678.47L298.1 684.90z" fill="url(#dR)" stroke="url(#dR)" stroke-width=".6" stroke-linejoin="round"/><path d="M285.1 675.4L297.8 680L297.8 684.60L285.3 680.23z" fill="#2e2e2e" stroke="#3a3a3a" stroke-width=".5" stroke-linejoin="round"/><rect x="295.30" y="680.50" width="1.30" height="2.00" rx=".4" fill="#19b325"/></g></svg>
<div class="t b" style="left:324.10px;top:723.7px;transform:scaleX(0.9667);transform-origin:0 50%;"><span class="k" style="width:39.23px">ディスク</span><span class="l" style="width:9.31px"> 2</span></div>
<div class="t" style="left:324.10px;top:739.5px;transform:scaleX(0.8870);transform-origin:0 50%;"><span class="l" style="width:22.45px">GPT</span></div>
<div class="t" style="left:324.10px;top:753.8px;transform:scaleX(0.9731);transform-origin:0 50%;"><span class="l" style="width:52.21px">931.51 GB</span></div>
<div style="left:391px;top:718px;width:78px;height:61px;border:2px solid #d5d5d5;background:#fff"></div>
<div style="left:399px;top:726px;width:62px;height:11px;background:#cacaca"></div>
<div style="left:399px;top:726px;width:20px;height:11px;background:#3c97d4"></div>
<div style="left:393px;top:739px;width:71.4px;height:38px;overflow:hidden">
<div class="t" style="left:3.70px;top:2px;transform:scaleX(0.9684);transform-origin:0 50%;"><span class="l" style="width:38.63px">(FAT32)</span></div>
<div class="t" style="left:3.399999999999989px;top:17px;"><span class="l" style="width:47.47px;transform:scaleX(0.975)">100 MB (</span><span class="j">使用</span></div>
</div>
<div style="left:471px;top:718px;width:78px;height:61px;border:2px solid #d5d5d5;background:#fff"></div>
<div style="left:479px;top:726px;width:62px;height:11px;background:#cacaca"></div>
<div style="left:479px;top:726px;width:62px;height:11px;background:#3c97d4"></div>
<div style="left:473px;top:739px;width:71.4px;height:38px;overflow:hidden">
<div class="t" style="left:3.70px;top:2px;transform:scaleX(1.0135);transform-origin:0 50%;"><span class="l" style="width:3.64px">(</span><span class="k" style="width:18.37px">その</span><span class="j">他</span><span class="l" style="width:3.64px">)</span></div>
<div class="t" style="left:2.64px;top:17px;transform:scaleX(1.0600);transform-origin:0 50%;"><span class="l" style="width:31.57px">16 MB</span></div>
</div>
<div style="left:551px;top:718px;width:82px;height:61px;border:2px solid #d5d5d5;background:#fff"></div>
<div style="left:559px;top:726px;width:66px;height:11px;background:#cacaca"></div>
<div style="left:559px;top:726px;width:39px;height:11px;background:#3c97d4"></div>
<div style="left:553px;top:739px;width:75.4px;height:38px;overflow:hidden">
<div class="t" style="left:2.70px;top:2px;transform:scaleX(0.9978);transform-origin:0 50%;"><span class="l" style="width:46.71px">D:(NTFS)</span></div>
<div class="t" style="left:3.4000000000000457px;top:17px;"><span class="l" style="width:51.94px;transform:scaleX(0.895)">125.6 GB (</span><span class="j">使用</span></div>
</div>
<div style="left:635px;top:718px;width:212px;height:61px;border:2px solid #d5d5d5;background:#fff"></div>
<div style="left:643px;top:726px;width:196px;height:11px;background:#cacaca"></div>
<div style="left:643px;top:726px;width:26px;height:11px;background:#3c97d4"></div>
<div style="left:637px;top:739px;width:205.4px;height:38px;overflow:hidden">
<div class="t" style="left:2.72px;top:2px;transform:scaleX(0.9756);transform-origin:0 50%;"><span class="l" style="width:10.32px">E:</span><span class="k" style="width:44.50px">ボリューム</span><span class="l" style="width:35.79px">(NTFS)</span></div>
<div class="t" style="left:3.70px;top:17px;transform:scaleX(0.9892);transform-origin:0 50%;"><span class="l" style="width:52.81px">317.0 GB (</span><span class="j">使用済</span><span class="l" style="width:31.57px">: 13%)</span></div>
</div>
<div style="left:849px;top:718px;width:195px;height:61px;border:2px solid #d5d5d5;background:#fff"></div>
<div style="left:857px;top:726px;width:179px;height:11px;background:#cacaca"></div>
<div style="left:857px;top:726px;width:49px;height:11px;background:#3c97d4"></div>
<div style="left:851px;top:739px;width:188.4px;height:38px;overflow:hidden">
<div class="t" style="left:2.71px;top:2px;transform:scaleX(0.9865);transform-origin:0 50%;"><span class="l" style="width:9.71px">F:</span><span class="k" style="width:44.50px">ボリューム</span><span class="l" style="width:35.79px">(NTFS)</span></div>
<div class="t" style="left:3.70px;top:17px;transform:scaleX(0.9908);transform-origin:0 50%;"><span class="l" style="width:52.81px">293.0 GB (</span><span class="j">使用済</span><span class="l" style="width:31.57px">: 27%)</span></div>
</div>
<div style="left:1046px;top:718px;width:129px;height:61px;border:2px solid #d5d5d5;background:#fff"></div>
<div style="left:1054px;top:726px;width:113px;height:11px;background:#cacaca"></div>
<div style="left:1054px;top:726px;width:83px;height:11px;background:#3c97d4"></div>
<div style="left:1048px;top:739px;width:122.4px;height:38px;overflow:hidden">
<div class="t" style="left:3.70px;top:2px;transform:scaleX(0.9739);transform-origin:0 50%;"><span class="l" style="width:11.53px">G:</span><span class="k" style="width:44.50px">ボリューム</span><span class="l" style="width:35.79px">(NTFS)</span></div>
<div class="t" style="left:2.70px;top:17px;transform:scaleX(0.9966);transform-origin:0 50%;"><span class="l" style="width:52.81px">195.3 GB (</span><span class="j">使用済</span><span class="l" style="width:31.57px">: 73%)</span></div>
</div>
<div style="left:1177px;top:718px;width:78px;height:61px;border:2px solid #d5d5d5;background:#fff"></div>
<div style="left:1185px;top:726px;width:62px;height:11px;background:#cacaca"></div>
<div style="left:1185px;top:726px;width:53px;height:11px;background:#3c97d4"></div>
<div style="left:1179px;top:739px;width:71.4px;height:38px;overflow:hidden">
<div class="t" style="left:3.70px;top:2px;transform:scaleX(0.9389);transform-origin:0 50%;"><span class="l" style="width:35.79px">(NTFS)</span></div>
<div class="t" style="left:3.4000000000000457px;top:17px;"><span class="l" style="width:47.47px;transform:scaleX(0.975)">572 MB (</span><span class="j">使用</span></div>
</div>
<div style="left:283px;top:792px;width:975px;height:63px;background:#e0f0ff;border-radius:5px"></div>
<svg style="left:283px;top:810px" width="37" height="32" viewBox="283 810 37 32"><g transform="translate(0 0)"><path d="M286.3 825.2L303.4 819L315.8 824.1L298 828.8z" fill="url(#dT)" stroke="url(#dT)" stroke-width=".8" stroke-linejoin="round"/><path d="M298 828.8L315.8 824.1L315.7 827.81L298.3 833.00z" fill="url(#dR)" stroke="url(#dR)" stroke-width=".6" stroke-linejoin="round"/><path d="M286.3 825.2L298 828.8L298 832.70L286.5 829.30z" fill="#2e2e2e" stroke="#3a3a3a" stroke-width=".5" stroke-linejoin="round"/><rect x="295.50" y="829.30" width="1.30" height="2.00" rx=".4" fill="#19b325"/><rect x="287.100" y="813" width="10.600" height="4.300" fill="#efefef" stroke="#cfcfcf" stroke-width=".4"/><rect x="289.600" y="814.700" width="1.500" height="1.300" fill="#777"/><rect x="293.600" y="814.700" width="1.500" height="1.300" fill="#777"/><rect x="286.100" y="817.100" width="11.900" height="6.900" fill="url(#uB)"/></g></svg>
<div class="t b" style="left:324.10px;top:798.7px;transform:scaleX(0.9812);transform-origin:0 50%;"><span class="k" style="width:39.23px">ディスク</span><span class="l" style="width:9.31px"> 3</span></div>
<div class="t" style="left:323.01px;top:814.5px;transform:scaleX(1.0913);transform-origin:0 50%;"><span class="l" style="width:24.27px">MBR</span></div>
<div class="t" style="left:324.10px;top:828.8px;transform:scaleX(0.9652);transform-origin:0 50%;"><span class="l" style="width:46.14px">28.87 GB</span></div>
<div style="left:391px;top:793px;width:866px;height:61px;border:2px solid #7b9ff0;background:#e0f0ff"></div>
<div style="left:399px;top:801px;width:850px;height:11px;background:#cacaca"></div>
<div style="left:399px;top:801px;width:436px;height:11px;background:#3c97d4"></div>
<div style="left:393px;top:814px;width:859.4px;height:38px;overflow:hidden">
<div class="t" style="left:2.68px;top:2px;transform:scaleX(1.0156);transform-origin:0 50%;"><span class="l" style="width:46.71px">H:(NTFS)</span></div>
<div class="t" style="left:3.70px;top:17px;transform:scaleX(0.9877);transform-origin:0 50%;"><span class="l" style="width:46.74px">28.9 GB (</span><span class="j">使用済</span><span class="l" style="width:31.57px">: 51%)</span></div>
</div>
<div style="left:2px;top:871px;width:1269px;height:19px;background:#f9f9f9;"></div>
<div class="t" style="left:7.00px;top:872px;transform:scaleX(1.0099);transform-origin:0 50%;"><span class="j">指定</span><span class="k" style="width:173.16px">されたパーティションをフォーマットします</span><span class="j">。</span></div>
</div></body></html>
